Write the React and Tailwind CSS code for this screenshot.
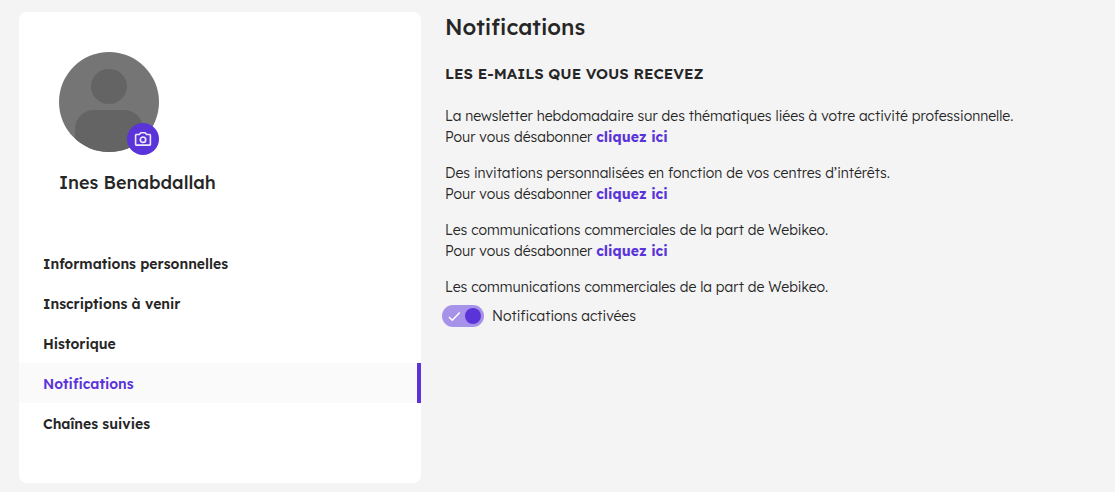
import { useState } from "react";

const links = [
  "Informations personnelles",
  "Inscriptions à venir",
  "Historique",
  "Notifications",
  "Chaînes suivies",
];

const mails = [
  "La newsletter hebdomadaire sur des thématiques liées à votre activité professionnelle.",
  "Des invitations personnalisées en fonction de vos centres d’intérêts.",
  "Les communications commerciales de la part de Webikeo.",
];

function Avatar() {
  return (
    <div className="relative size-[100px]">
      <svg viewBox="0 0 100 100" className="size-full rounded-full" aria-hidden="true">
        <rect width="100" height="100" fill="#757575" />
        <ellipse cx="50" cy="34.5" rx="18" ry="17.5" fill="#646464" />
        <path d="M16 100V77a19 19 0 0 1 19-19h30a19 19 0 0 1 19 19v23Z" fill="#646464" />
      </svg>
      <button
        type="button"
        aria-label="Modifier la photo"
        className="absolute right-0 -bottom-[3px] flex size-8 items-center justify-center rounded-full bg-[#5a34d9] text-[#eeeafb]"
      >
        <svg viewBox="0 0 20 20" className="size-5" fill="currentColor" aria-hidden="true">
          <path
            fillRule="evenodd"
            d="M7.5 3h5L14 4.700h2.600c.9 0 1.600.7 1.600 1.600v9c0 .9-.7 1.600-1.600 1.600H3.400c-.9 0-1.600-.7-1.600-1.600v-9c0-.9.7-1.600 1.600-1.600H6L7.500 3Zm.7 1.600L6.700 6.300H3.400v9h13.200v-9h-3.300l-1.500-1.700H8.200Z"
          />
          <circle cx="10" cy="10.700" r="2.700" fill="none" stroke="currentColor" strokeWidth="1.700" />
        </svg>
      </button>
    </div>
  );
}

function Sidebar() {
  return (
    <aside className="self-start overflow-hidden rounded-lg bg-white py-10">
      <div className="px-10">
        <Avatar />
        <p className="mt-[17px] text-[18px] leading-7 font-medium">Ines Benabdallah</p>
      </div>
      <nav className="mt-[46px] flex flex-col">
        {links.map((label) => {
          const active = label === "Notifications";
          return (
            <a
              key={label}
              href="#"
              aria-current={active ? "page" : undefined}
              className={
                active
                  ? "border-r-4 border-[#5a34d9] bg-[#fafafa] px-6 pt-0.5 text-[14px] leading-[38px] font-semibold text-[#5a34d9]"
                  : "px-6 pt-0.5 text-[14px] leading-[38px] font-semibold"
              }
            >
              {label}
            </a>
          );
        })}
      </nav>
    </aside>
  );
}

function Toggle() {
  const [on, setOn] = useState(true);
  return (
    <label className="flex cursor-pointer items-center gap-2">
      <span className="relative flex h-[22px] w-[42px] items-center">
        <input
          type="checkbox"
          role="switch"
          checked={on}
          onChange={(e) => setOn(e.target.checked)}
          className="h-full w-full cursor-pointer appearance-none rounded-full bg-gray-300 checked:bg-[#a692e8]"
        />
        <svg
          viewBox="0 0 42 22"
          className="pointer-events-none absolute inset-0 size-full"
          aria-hidden="true"
        >
          {on && <path d="m7 12 3.300 3.200 7.400-7.700" fill="none" stroke="#fff" strokeWidth="1.500" />}
          <circle cx={on ? 31 : 11} cy="11" r="8" fill={on ? "#5a34d9" : "#757575"} />
        </svg>
      </span>
      Notifications activées
    </label>
  );
}

export default function App() {
  return (
    <div className="grid min-h-screen grid-cols-[402fr_673fr] gap-[21px] bg-[#f4f4f4] py-3 pl-[19px] font-['Lexend_Deca','Lexend',Inter,sans-serif] text-[#262626]">
      <Sidebar />
      <main className="text-[14px] leading-[21px] font-light">
        <div className="px-[3px]">
          <h1 className="text-[22px] leading-[30px] font-medium">Notifications</h1>
          <h2 className="mt-[21px] text-[15px] font-semibold uppercase">Les e-mails que vous recevez</h2>
          <div className="mt-[22px] flex flex-col gap-[15px]">
            {mails.map((text) => (
              <p key={text}>
                {text}
                <br />
                Pour vous désabonner{" "}
                <a href="#" className="font-bold text-[#5a34d9]">
                  cliquez ici
                </a>
              </p>
            ))}
            <p>Les communications commerciales de la part de Webikeo.</p>
          </div>
        </div>
        <div className="mt-[7px]">
          <Toggle />
        </div>
      </main>
    </div>
  );
}
